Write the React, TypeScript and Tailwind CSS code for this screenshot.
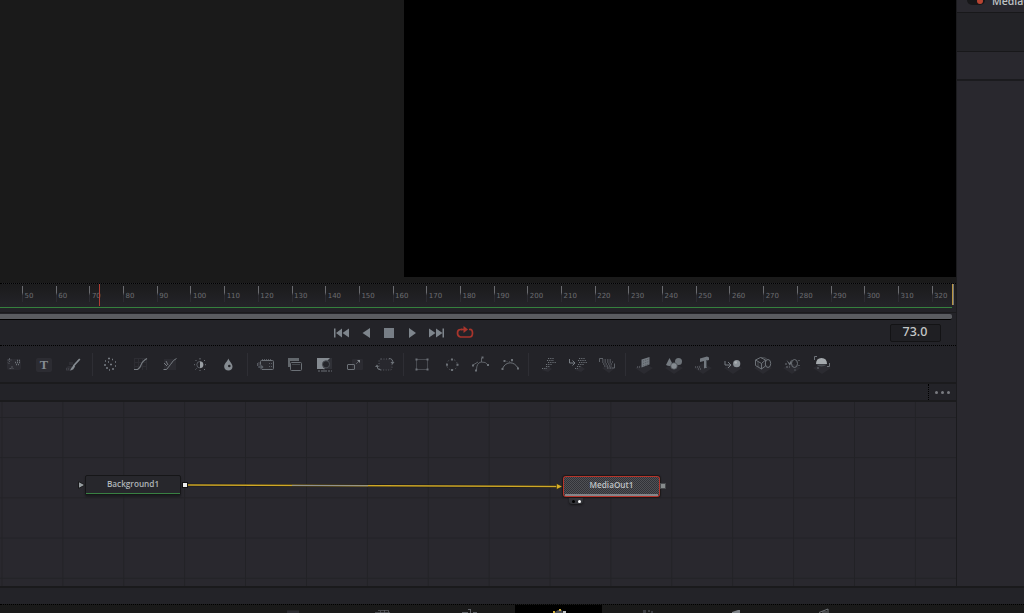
import type { ReactNode } from "react";

const frames = Array.from({ length: 28 }, (_, i) => 50 + i * 10);

interface IconProps {
  children: ReactNode;
}

function Icon({ children }: IconProps) {
  return (
    <svg
      viewBox="0 0 30 24"
      className="h-6 w-[30px] shrink-0 text-[#6c7177]"
      fill="none"
      stroke="currentColor"
      strokeWidth="1"
    >
      {children}
    </svg>
  );
}

function Separator() {
  return (
    <div className="flex w-[7px] shrink-0 justify-center">
      <div className="h-[23px] w-px bg-[#2e2e34]" />
    </div>
  );
}

function Base() {
  return <path d="M6 15l9-5 9 5-9 6z" fill="#2b2b31" stroke="none" />;
}

const generators = [
  <Icon key="fastnoise">
    <rect x="8" y="6" width="14" height="11" rx="2" fill="#2b2b31" stroke="none" />
    <path d="M8.500 7h4M10.500 5v4M9 9.500l2 2M10.500 15.500h4M13 13v3" strokeOpacity=".7" strokeDasharray="2 1" />
    <path d="M18 7.500h3M16 9.500h5M17 11.500h3" strokeDasharray="1 1" strokeWidth="1.3" />
  </Icon>,
  <Icon key="text">
    <rect x="7" y="5" width="16" height="14" rx="2" fill="#2c2c32" stroke="none" />
    <text
      x="15"
      y="16"
      textAnchor="middle"
      fontSize="12.5"
      fontWeight="700"
      fill="#868c92"
      stroke="none"
      fontFamily="Liberation Serif, serif"
    >
      T
    </text>
  </Icon>,
  <Icon key="paint">
    <path d="M7 15l2-2h4v5H7zM10 9h4v3h-4z" fill="#2e2e34" stroke="none" />
    <path d="M20.8 6l-6.4 7" stroke="#858b91" strokeWidth="1.8" />
    <path d="M14.5 12l1.6 1.6-2 3-3.1 1 1.4-2.5z" fill="#858b91" stroke="none" />
    <path d="M7 16h4" strokeDasharray="1 1" strokeOpacity=".5" />
  </Icon>,
];

const colorTools = [
  <Icon key="particles">
    <path
      d="M10 8h1M13 5.5h2M17 6.5h1M20 9h1M9 12h2M15 11.5h2M20 13h1M11 15h2M17 16h2M14 17h1M13 9h1"
      strokeWidth="1.5"
      stroke="#777c82"
    />
  </Icon>,
  <Icon key="curves">
    <path d="M9 5.5h13M9 9.5h13M9 13.5h13M9.5 5v12M13.5 5v12M17.5 5v12M21.5 5v12" stroke="#2d2d33" />
    <path d="M9 16.5h3.500q2.500-1 3.500-4.500t6-6.500" stroke="#777c82" strokeWidth="1.1" />
  </Icon>,
  <Icon key="hue-curves">
    <path d="M9 6h12v11H9z" fill="#2b2b31" stroke="none" />
    <path d="M8.5 16.5h3l4-5 3-4 3-2M9 10l3 3M11 8l2 4" stroke="#777c82" />
  </Icon>,
  <Icon key="brightness">
    <circle cx="15" cy="11.7" r="3.2" strokeOpacity=".7" />
    <path d="M15 8.5a3.2 3.2 0 010 6.4z" fill="#9a9fa4" stroke="none" />
    <path d="M15 5v1.5M15 17v1M9 11.7h1M20 11.7h1M10.5 7l1 1M19 16l1 1M20 7l-1 1M10.5 16.5l1-1" />
  </Icon>,
  <Icon key="blur">
    <path
      fillRule="evenodd"
      d="M13.3 5.5c1 3 4.2 5 4.2 8.2 0 2.2-1.7 3.8-4.1 3.8s-4.2-1.6-4.2-3.8c0-3.2 3.1-5 4.1-8.2zm1 6.2a1.3 1.3 0 100 2.6 1.3 1.3 0 000-2.6z"
      fill="#858b91"
      stroke="none"
    />
  </Icon>,
];

const compositing = [
  <Icon key="tracker">
    <rect x="10.5" y="7.5" width="13" height="9" rx="1" fill="#2a2a2f" />
    <path d="M12 6.5h10M19 10.5h3M19 13.5h3" strokeDasharray="1 1" strokeOpacity=".7" />
    <path d="M7.5 10v3M9 9v5" strokeOpacity=".7" />
    <path d="M8 13h3v-2l3 3-3 3v-2H8z" fill="#5a5f65" stroke="#232328" strokeWidth=".5" />
  </Icon>,
  <Icon key="merge">
    <path d="M8 5h11v3h-9v6H8z" fill="#62676c" stroke="none" />
    <rect x="10.5" y="9.5" width="11" height="8" rx="1" fill="#232328" stroke="#6b7076" />
    <path d="M12 11.5h8" stroke="#44484d" />
  </Icon>,
  <Icon key="matte">
    <rect x="7" y="5" width="15" height="11" fill="#303137" stroke="none" />
    <path d="M7 5h13l-3 3-4 2v4l2 2H7z" fill="#858b91" stroke="none" />
    <circle cx="16" cy="11.3" r="3.6" fill="#25262b" stroke="#4d5157" />
    <path d="M8 18h5M15 18h7" strokeDasharray="2 1" />
    <path d="M14 16.5V19" />
  </Icon>,
  <Icon key="resize">
    <rect x="12" y="6" width="11" height="11" rx="1" fill="#2b2b31" stroke="none" />
    <rect x="7.5" y="11.5" width="7" height="5" rx=".5" />
    <path d="M16 11l3-3" strokeDasharray="1 .7" />
    <path d="M17 7h3v3z" fill="#8a8f94" stroke="none" />
  </Icon>,
  <Icon key="transform">
    <rect x="9" y="6" width="13" height="11" rx="2" fill="#28282e" strokeDasharray="1 1.5" strokeOpacity=".7" />
    <path d="M19 5.5q4 0 4 4.5M7 13q0 4 4 4" />
    <path d="M20.5 9h4l-2 2.5zM5 14h4l-2-2.5z" fill="currentColor" stroke="none" />
  </Icon>,
];

const masks = [
  <Icon key="rectangle">
    <rect x="9.5" y="6.5" width="11" height="10" strokeDasharray="1 1" />
    <path d="M8.5 6.5h2M8.5 16.5h2M19.5 6.5h2M19.5 16.5h2" strokeWidth="2" />
  </Icon>,
  <Icon key="ellipse">
    <circle cx="15" cy="11.7" r="5.3" strokeDasharray="1.5 1.8" strokeOpacity=".6" />
    <path d="M14 6.5h2M14 17h2M9 11.7h2M19.5 11.7h2" strokeWidth="2" />
  </Icon>,
  <Icon key="polygon">
    <path d="M10.5 17q0-7 4.500-8 5-.5 7 3M7 12l5-3M15.500 5v4" strokeOpacity=".8" />
    <path d="M6 12.5h2M9 17.500h2M15.5 4.5h2M21 12h2" strokeWidth="1.800" />
  </Icon>,
  <Icon key="bspline">
    <path d="M6.5 15.5C10 8 18 8 22 15" />
    <path d="M8 8.5h10" strokeDasharray="1 1.5" strokeOpacity=".5" />
    <path d="M5.500 16h2M21 15.5h2M7.5 8h2M15 7h2" strokeWidth="2" />
  </Icon>,
];

const particles = [
  <Icon key="emitter">
    <path d="M8 17l6-4 4 3-4 3z" fill="#2c2c32" stroke="none" />
    <path
      d="M14 5.5h6M13 7.5h7M14 9.5h8M12 11.5h6M12 13.500h4M8 15.5h5"
      strokeDasharray="1.200 1"
      strokeWidth="1.1"
    />
  </Icon>,
  <Icon key="merge-particles">
    <path d="M11 17l6-4 4 3-4 3z" fill="#2c2c32" stroke="none" />
    <path d="M5.5 6v4h5M8.5 7.500l2.500 2.500-2.500 2.500" stroke="#777c82" />
    <path
      d="M15 5.5h6M14 7.5h8M15 9.500h8M14 11.5h6M13 13.5h4M11 15.5h3"
      strokeDasharray="1.200 1"
      strokeWidth="1.1"
    />
  </Icon>,
  <Icon key="render-particles">
    <path d="M9 15l7-3 6 3-6 5z" fill="#2c2c32" stroke="none" />
    <path d="M6.5 9V5.500H10M21.5 10.500v4.500h-3" strokeOpacity=".8" />
    <path
      d="M9 7h9M9 9h11M10 11h10M11 13h8M14 15h4"
      strokeDasharray="1.500 1"
      strokeWidth="1.1"
    />
  </Icon>,
];

const threeD = [
  <Icon key="plane">
    <Base />
    <path d="M12.5 6.5l8-2.500v7.500l-8 3z" fill="#737980" stroke="none" />
    <path d="M14 8l6-2M14 10.5l6-2M14 13l6-2" stroke="#555a60" strokeDasharray="1 1" />
    <path d="M8 14h4" strokeDasharray="1 1" />
  </Icon>,
  <Icon key="shape">
    <Base />
    <path d="M10.5 5l3.5 7q-3.500 2-7 0z" fill="#757b81" stroke="none" />
    <circle cx="19.5" cy="8.5" r="3.5" fill="#6d7379" stroke="none" />
    <circle cx="15" cy="13" r="3.3" fill="#858b91" stroke="#44484d" strokeWidth=".7" />
  </Icon>,
  <Icon key="text-3d">
    <Base />
    <path d="M12 5.500l7-2 2 1V7l-2 .5v7l-3 1V8l-4 1z" fill="#737980" stroke="none" />
    <path d="M18.5 7v7" stroke="#454a50" />
    <path d="M7 14h5M10 16h3" strokeDasharray="1 1" />
  </Icon>,
  <Icon key="merge-3d">
    <Base />
    <path d="M7 8v4h5M10 9l3 3-3 3" stroke="#777c82" />
    <circle cx="18.7" cy="10.7" r="3.6" fill="#8b9197" stroke="none" />
    <circle cx="17.7" cy="9.5" r="1.3" fill="#acb0b4" stroke="none" />
  </Icon>,
  <Icon key="camera">
    <Base />
    <path d="M7.5 7l5-2.500 5 2.500v6l-4 3-6-3.500zM7.5 7l6 3.500V16M13.5 10.500l4-3.500" />
    <path d="M10 9v5M12.5 4.500l5 .5 2 2" strokeOpacity=".6" />
    <ellipse cx="20" cy="10.5" rx="2.7" ry="4" />
  </Icon>,
  <Icon key="spotlight">
    <Base />
    <ellipse cx="17.500" cy="10.5" rx="3" ry="4" />
    <path d="M9.5 7l3 3 2-3.500v4l-2 2z" fill="currentColor" stroke="none" />
    <path d="M8 11h2M9 14h2M12 14h1M22 7v1M22 12v1M18 16.500v1" strokeWidth="1.2" />
  </Icon>,
  <Icon key="renderer">
    <Base />
    <path d="M7.5 7V3.500H10M22.5 10v3.500H20M10 15h2" />
    <path d="M9 11q0-6 5.5-6t5.5 6z" fill="#a4a9ad" stroke="none" />
    <path d="M9 11.5h11q-5.500 4-11 0z" fill="#4a4e54" stroke="none" />
  </Icon>,
];

function Ruler() {
  return (
    <div className="relative flex h-6 shrink-0 overflow-hidden border-t border-dotted border-black bg-linear-to-b from-[#1b1b1c] to-[#242429] pt-[2px] pl-[22px]">
      {frames.map((frame) => (
        <div key={frame} className="flex w-[33.7px] shrink-0">
          <div className="h-4 w-px bg-linear-to-b from-[#6a6b6f] from-40% to-[#2c2c32] to-60%" />
          <span className="pt-[6px] pl-[1.5px] font-['DejaVu_Sans',sans-serif] text-[7px] leading-[8px] text-[#6c6d71]">
            {frame}
          </span>
        </div>
      ))}
      {/* Playhead and render end */}
      <div className="absolute top-0 left-[99px] h-[22px] w-px bg-[#b03d34]" />
      <div className="absolute top-0 left-[952px] h-[21px] w-[2px] border-r border-[#777] bg-[#b99540]" />
    </div>
  );
}

function Transport() {
  return (
    <div className="flex h-[25px] shrink-0 items-center pl-[333px] text-[#7e858c]">
      <svg className="h-3 w-[17px]" viewBox="0 0 17 12" fill="currentColor">
        <path d="M1 1.5h1.5v9H1zM9 1.5v9L3 6zM16 1.5v9L9.5 6z" />
      </svg>
      <svg className="ml-[12px] h-3 w-2" viewBox="0 0 8 12" fill="currentColor">
        <path d="M8 1v10L.5 6z" />
      </svg>
      <div className="ml-[14px] size-[10px] bg-[#777e86]" />
      <svg className="ml-[15px] h-3 w-2" viewBox="0 0 8 12" fill="currentColor">
        <path d="M0 1v10l7-5z" />
      </svg>
      <svg className="ml-[12px] h-3 w-[16px]" viewBox="0 0 16 12" fill="currentColor">
        <path d="M0 1.5v9L6.5 6zM7 1.5v9L13.5 6zM13.5 1.5H15v9h-1.5z" />
      </svg>
      <svg className="ml-[11px] h-[13px] w-[18px]" viewBox="0 0 18 13" fill="none">
        <path d="M6 3.5H4.5Q1.5 3.500 1.5 7t3 4h9q3 0 3-4t-3-3.500H13" stroke="#a8352c" strokeWidth="1.7" />
        <path d="M5 3.5h4" stroke="#a8352c" strokeWidth="1.7" />
        <path d="M7.5 0L12 3.500 7.5 7z" fill="#a8352c" />
      </svg>
      <div className="mr-[15px] ml-auto flex h-[18px] w-[51px] items-center justify-center rounded-[2px] border border-[#131315] bg-[#1f1f23] pr-px font-['Noto_Sans',sans-serif] text-[12.5px] leading-none font-medium text-[#c5c7c8]">
        73.0
      </div>
    </div>
  );
}

function Toolbar() {
  return (
    <div className="flex h-[37px] shrink-0 items-center overflow-hidden border-t border-dotted border-black pt-px">
      <div className="-ml-px flex">{generators}</div>
      <Separator />
      <div className="-ml-px flex">{colorTools}</div>
      <div className="-ml-px flex">
        <Separator />
      </div>
      <div className="-ml-px flex">{compositing}</div>
      <Separator />
      <div className="flex -space-x-[0.3px]">{masks}</div>
      <div className="-ml-px flex">
        <Separator />
      </div>
      <div className="ml-[2px] flex -space-x-[0.5px]">{particles}</div>
      <div className="-ml-px flex">
        <Separator />
      </div>
      <div className="flex -space-x-[0.4px]">{threeD}</div>
    </div>
  );
}

function NodeGraph() {
  return (
    <div className="relative h-[184px] shrink-0 overflow-hidden bg-[#29282e] bg-[linear-gradient(to_right,#222226_1px,transparent_1px),linear-gradient(to_bottom,#222226_1px,transparent_1px)] bg-size-[60.9px_40.2px] bg-position-[1.5px_15px]">
      <svg className="absolute inset-0 h-full w-full" viewBox="0 0 956 184">
        <path d="M188 83l369 1.500" stroke="#151414" strokeWidth="2.600" />
        <path d="M188 83l369 1.500" stroke="#cfa828" strokeWidth="1.600" />
        <path d="M292 83.400l76 .3" stroke="#8e9295" strokeWidth="1" />
        <path d="M556.5 81.500l6 3-6 3z" fill="#d8ae24" stroke="#191919" strokeWidth=".5" />
        <path d="M78.5 79.500l6.500 3.500-6.500 3.500z" fill="#979da0" stroke="#19191b" />
      </svg>

      <div className="absolute top-[73px] left-[85px] flex h-[20px] w-[96px] justify-center rounded-[2px] border border-[#161618] bg-[#27272c] shadow-[0_2px_2px_#1c1c20]">
        <span className="pt-[2px] font-['Open_Sans',sans-serif] text-[8.2px] leading-[12px] font-semibold text-[#b0b5b8]">
          Background1
        </span>
        <div className="absolute inset-x-0 bottom-0 h-px bg-[#398043]" />
      </div>
      <div className="absolute top-[80px] left-[182px] size-[6px] border border-[#111] bg-[#ececec]" />

      <div className="absolute top-[74px] left-[563px] h-[21px] w-[97px] rounded-[3px] bg-[#b5342b] p-px shadow-[0_0_1px_1px_#1b1718]">
        <div className="flex h-full flex-col items-center rounded-[2px] bg-[#414246] bg-[repeating-conic-gradient(#323338_0_25%,#505155_0_50%)] bg-size-[2px_2px]">
          <span className="pt-[2px] font-['Open_Sans',sans-serif] text-[8.2px] leading-[12px] font-semibold text-[#c0c4c6]">
            MediaOut1
          </span>
          <div className="mt-auto h-[2px] w-[93px] bg-[#85868a]" />
        </div>
      </div>
      <div className="absolute top-[81px] left-[660px] size-[6px] border border-[#47494c] bg-[#868b8c]" />
      <div className="absolute top-[96px] left-[569px] flex h-[6px] w-[14px] items-center justify-center gap-[3px] rounded-b-[3px] bg-[#323338] shadow-[0_1px_2px_#151517]">
        <div className="size-[3px] rounded-full bg-black" />
        <div className="size-[3px] rounded-full bg-white" />
      </div>
    </div>
  );
}

function PageTabs() {
  return (
    <div className="flex h-[9px] shrink-0 overflow-hidden border-t border-dotted border-black bg-[#1a1a1a]">
      <svg className="h-2 w-[515px]" viewBox="0 0 515 8" fill="none" stroke="#606368">
        <path d="M287 5.5h12V8h-12z" fill="#2c2c32" stroke="none" />
        <path d="M375 7.5h15M378 5.5h11M380.5 6v2M384.5 5v3M388.5 6v2" strokeOpacity=".7" />
        <path d="M462 7.5h6M473 7.5h4M470.5 4v4M468 4.5h3" />
      </svg>
      <div className="flex w-[87px] justify-center bg-black">
        <svg className="h-2 w-4" viewBox="0 0 16 8">
          <path d="M4 7l3-2h4l1 3H4z" fill="#4b4e52" />
          <path d="M2 6h2v2H2zM8 4h2v2H8z" fill="#d1af3c" />
          <path d="M12 6h3v2h-3z" fill="#c0c3c5" />
        </svg>
      </div>
      <svg className="h-2 w-[422px]" viewBox="602 0 422 8" fill="none">
        <path d="M643 5h3v3h-3zM648 5h2v2h-2zM651 6h2v2h-2z" fill="#3c3e43" />
        <path d="M732 7l6-2h2v3h-8z" fill="#7e8388" />
        <path d="M819 7.5l9-3.500v4M822 7h5" stroke="#717579" />
      </svg>
    </div>
  );
}

function Inspector() {
  return (
    <div className="flex flex-1 flex-col overflow-hidden border-l border-[#1b1b1e] bg-[#29282e]">
      <div className="flex h-3 shrink-0 overflow-hidden">
        <div className="ml-[10px] flex h-[5px] w-[18px] shrink-0 justify-end rounded-b-[5px] bg-[#171719] pr-[2px]">
          <div className="-mt-[2px] size-[6px] rounded-full bg-[#b84432]" />
        </div>
        <span className="-mt-[6px] ml-[7px] font-['Open_Sans',sans-serif] text-[10.5px] leading-[14px] font-semibold whitespace-nowrap text-[#bfc2c4]">
          MediaOut1
        </span>
      </div>
      <div className="h-[40px] shrink-0 border-y border-[#18181a] bg-[#232327]" />
      <div className="h-[29px] shrink-0 border-b-2 border-[#1b1b1e]" />
    </div>
  );
}

export default function App() {
  return (
    <div className="flex h-[613px] w-[1024px] flex-col overflow-hidden bg-[#232328]">
      <div className="flex h-[586px] shrink-0">
        <div className="flex w-[956px] shrink-0 flex-col">
          {/* Viewers */}
          <div className="flex h-[283px] shrink-0 bg-[#1a1a1a]">
            <div className="w-[404px]" />
            <div className="h-[277px] flex-1 bg-black" />
          </div>
          <Ruler />
          {/* Cached range and scrollbar */}
          <div className="mr-[4px] h-px shrink-0 bg-[#35803d]" />
          <div className="h-[5px] shrink-0 border-b border-[#1b1b1d]" />
          <div className="mt-px mr-[4px] h-[6px] shrink-0 rounded-r-[2px] border-b border-black bg-[#5a5c60]" />
          <Transport />
          <Toolbar />
          <div className="flex h-[20px] shrink-0 border-y-2 border-[#1b1b1d]">
            <div className="ml-auto flex w-[28px] items-center justify-center gap-[3px] border-l border-dotted border-black pr-px">
              <div className="size-[3px] rounded-full bg-[#797b80]" />
              <div className="size-[3px] rounded-full bg-[#797b80]" />
              <div className="size-[3px] rounded-full bg-[#797b80]" />
            </div>
          </div>
          <NodeGraph />
        </div>
        <Inspector />
      </div>
      <div className="h-[18px] shrink-0 border-t-2 border-[#1a1a1c]" />
      <PageTabs />
    </div>
  );
}
